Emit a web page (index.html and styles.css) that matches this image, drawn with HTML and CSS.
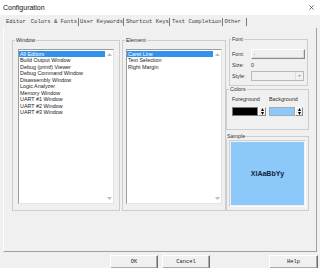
FILE: index.html
```html
<!DOCTYPE html>
<html lang="en">
<head>
    <meta charset="UTF-8">
    <meta name="viewport" content="width=device-width, initial-scale=1.0">
    <title>Configuration</title>
    <link rel="stylesheet" href="styles.css">
</head>
<body>
    <div class="titlebar">
        <span class="title">Configuration</span>
        <svg class="close" width="5" height="5" viewBox="0 0 5 5">
            <path d="M0.5 0.5 L4.5 4.5 M4.5 0.5 L0.5 4.5" stroke="#333" stroke-width="0.7" fill="none"/>
        </svg>
    </div>

    <div class="tabs">
        <span class="tab first">Editor</span>
        <span class="tab active">Colors &amp; Fonts</span>
        <span class="tab">User Keywords</span>
        <span class="tab">Shortcut Keys</span>
        <span class="tab">Text Completion</span>
        <span class="tab last">Other</span>
    </div>

    <div class="panel">
        <fieldset class="group window-group">
            <legend>Window</legend>
            <div class="listbox">
                <ul class="items">
                    <li class="selected">All Editors</li>
                    <li>Build Output Window</li>
                    <li>Debug (printf) Viewer</li>
                    <li>Debug Command Window</li>
                    <li>Disassembly Window</li>
                    <li>Logic Analyzer</li>
                    <li>Memory Window</li>
                    <li>UART #1 Window</li>
                    <li>UART #2 Window</li>
                    <li>UART #3 Window</li>
                </ul>
                <div class="scrollbar">
                    <svg width="5" height="3" viewBox="0 0 5 3"><polygon points="0,3 2.5,0 5,3" fill="#bdbdbd"/></svg>
                    <svg width="5" height="3" viewBox="0 0 5 3"><polygon points="0,0 2.5,3 5,0" fill="#bdbdbd"/></svg>
                </div>
            </div>
        </fieldset>

        <fieldset class="group element-group">
            <legend>Element</legend>
            <div class="listbox">
                <ul class="items">
                    <li class="selected">Caret Line</li>
                    <li>Text Selection</li>
                    <li>Right Margin</li>
                </ul>
                <div class="scrollbar">
                    <svg width="5" height="3" viewBox="0 0 5 3"><polygon points="0,3 2.5,0 5,3" fill="#bdbdbd"/></svg>
                    <svg width="5" height="3" viewBox="0 0 5 3"><polygon points="0,0 2.5,3 5,0" fill="#bdbdbd"/></svg>
                </div>
            </div>
        </fieldset>

        <div class="side">
            <fieldset class="group font-group">
                <legend>Font</legend>
                <div class="field-row">
                    <span class="field-label">Font:</span>
                    <span class="font-button"><span class="dot"></span></span>
                </div>
                <div class="field-row">
                    <span class="field-label">Size:</span>
                    <span>0</span>
                </div>
                <div class="field-row">
                    <span class="field-label">Style:</span>
                    <span class="combo">
                        <span class="combo-arrow">
                            <svg width="3" height="2" viewBox="0 0 3 2"><polygon points="0,0 1.5,2 3,0" fill="#a0a0a0"/></svg>
                        </span>
                    </span>
                </div>
            </fieldset>

            <fieldset class="group colors-group">
                <legend>Colors</legend>
                <div class="color-grid">
                    <span>Foreground</span>
                    <span>Background</span>
                    <div class="color-pick">
                        <span class="swatch fg"></span>
                        <span class="spin">
                            <svg width="3" height="7" viewBox="0 0 3 7"><polygon points="0,3 1.5,0 3,3" fill="#000"/><polygon points="0,4 1.5,7 3,4" fill="#000"/></svg>
                        </span>
                    </div>
                    <div class="color-pick">
                        <span class="swatch bg"></span>
                        <span class="spin">
                            <svg width="3" height="7" viewBox="0 0 3 7"><polygon points="0,3 1.5,0 3,3" fill="#000"/><polygon points="0,4 1.5,7 3,4" fill="#000"/></svg>
                        </span>
                    </div>
                </div>
            </fieldset>

            <fieldset class="group sample-group">
                <legend>Sample</legend>
                <div class="sample-frame">
                    <div class="sample">XlAaBbYy</div>
                </div>
            </fieldset>
        </div>
    </div>

    <div class="buttons">
        <button type="button">OK</button>
        <button type="button">Cancel</button>
        <button type="button" class="help">Help</button>
    </div>
</body>
</html>
```

FILE: styles.css
```css
body {
    margin: 0;
    width: 320px;
    height: 268px;
    overflow: hidden;
    background: #f0f0f0;
    font-family: 'Liberation Sans', Arial, sans-serif;
    font-size: 5.4px;
    color: #000;
}

.titlebar {
    height: 15px;
    background: #fff;
    display: flex;
    align-items: center;
    justify-content: space-between;
    padding: 0 6px 0 3px;
    box-sizing: border-box;
}

.title {
    font-size: 7px;
    color: #111;
}

.tabs {
    height: 13px;
    display: flex;
    align-items: center;
    padding-left: 6px;
    box-sizing: border-box;
    font-family: 'Liberation Mono', monospace;
    font-size: 5.5px;
    color: #3c3c3c;
}

.tab {
    line-height: 8px;
    padding: 0 0.5px 0 1.5px;
    border-right: 1px solid #7a7a7a;
}

.tab.first {
    padding: 0 3.5px 0 0;
    border-right: none;
}

.tab.last {
    padding-right: 5px;
}

.panel {
    height: 224px;
    margin: 0 3px;
    border-left: 1px solid #fff;
    border-right: 1px solid #a0a0a0;
    border-bottom: 1px solid #a0a0a0;
    padding: 8px 0 0 8px;
    box-sizing: border-box;
    display: flex;
    align-items: flex-start;
}

.group {
    margin: 0;
    border: 1px solid #cdcdcd;
    box-sizing: border-box;
    min-width: 0;
}

.group legend {
    padding: 0 1px;
    margin-left: -3px;
    line-height: 6px;
    font-size: 5.4px;
    color: #333;
}

.window-group {
    margin-top: 1px;
    width: 108px;
    height: 174px;
    padding: 6px 5px;
}

.element-group {
    margin: 1px 0 0 2px;
    width: 104px;
    height: 174px;
    padding: 6px 3px;
}

.element-group legend {
    margin-left: -1px;
}

.listbox {
    height: 155px;
    background: #fff;
    border: 1px solid;
    border-color: #9c9c9c #e3e3e3 #e3e3e3 #9c9c9c;
    box-sizing: border-box;
    display: flex;
}

.items {
    list-style: none;
    margin: 0;
    padding: 0.5px 0 0 0;
    flex: 1;
}

.items li {
    line-height: 6.5px;
    height: 6.5px;
    padding-left: 1px;
    white-space: nowrap;
    color: #222;
}

.items li.selected {
    background: #3391ec;
    color: #fff;
}

.scrollbar {
    width: 8px;
    display: flex;
    flex-direction: column;
    justify-content: space-between;
    align-items: center;
    padding: 3px 0 3px;
    box-sizing: border-box;
}

.side {
    width: 83px;
    display: flex;
    flex-direction: column;
}

.font-group {
    margin-left: 3px;
    width: 79px;
    height: 50px;
    padding: 7px 2px 4px;
}

.font-group legend {
    margin-left: -1px;
}

.field-row {
    display: flex;
    align-items: center;
    height: 10px;
    margin-bottom: 1px;
    color: #333;
}

.field-label {
    width: 19px;
}

.font-button {
    width: 54px;
    height: 10px;
    box-sizing: border-box;
    border: 1px solid;
    border-color: #fff #8a8a8a #8a8a8a #fff;
    box-shadow: inset -1px -1px 0 #d8d8d8;
    display: flex;
    align-items: center;
    padding-left: 2px;
}

.dot {
    width: 1px;
    height: 1px;
    background: #b5b5b5;
}

.combo {
    width: 53px;
    height: 10px;
    box-sizing: border-box;
    border: 1px solid #b9b9b9;
    display: flex;
    justify-content: flex-end;
}

.combo-arrow {
    width: 7px;
    border-left: 1px solid #dcdcdc;
    display: flex;
    align-items: center;
    justify-content: center;
}

.colors-group {
    width: 83px;
    height: 44px;
    padding: 4px 5px 0;
}

.colors-group legend {
    margin-left: -3px;
}

.color-grid {
    display: grid;
    grid-template-columns: 37px 37px;
    row-gap: 5px;
    line-height: 6px;
    color: #333;
}

.color-pick {
    display: flex;
    height: 9px;
}

.swatch {
    width: 26px;
    height: 9px;
    box-sizing: border-box;
    border: 1px solid #7a7a7a;
}

.swatch.fg {
    background: #000;
}

.swatch.bg {
    background: #8cc8fa;
    border-color: #a9a9a9;
}

.spin {
    width: 8px;
    height: 9px;
    box-sizing: border-box;
    border: 1px solid;
    border-color: #fff #8a8a8a #8a8a8a #fff;
    display: flex;
    align-items: center;
    justify-content: center;
}

.sample-group {
    margin-top: 3px;
    width: 83px;
    height: 78px;
    padding: 1px 2px 3px;
}

.sample-frame {
    height: 67px;
    box-sizing: border-box;
    border: 1px solid;
    border-color: #d0d0d0 #fff #fff #d0d0d0;
    padding: 1px;
}

.sample {
    height: 100%;
    background: #8cc8fa;
    display: flex;
    align-items: center;
    justify-content: center;
    font-size: 7px;
    font-weight: bold;
    color: #14233d;
}

.buttons {
    display: flex;
    gap: 4px;
    padding: 3px 2px 0 110px;
}

.buttons button {
    width: 48px;
    height: 14px;
    margin: 0;
    padding: 0;
    background: #f0f0f0;
    border: 1px solid;
    border-color: #fff #6f6f6f #6f6f6f #fff;
    box-shadow: inset -1px -1px 0 #a8a8a8;
    font-family: 'Liberation Mono', monospace;
    font-size: 5.4px;
    color: #222;
}

.buttons .help {
    width: 49px;
    margin-left: auto;
}
```
